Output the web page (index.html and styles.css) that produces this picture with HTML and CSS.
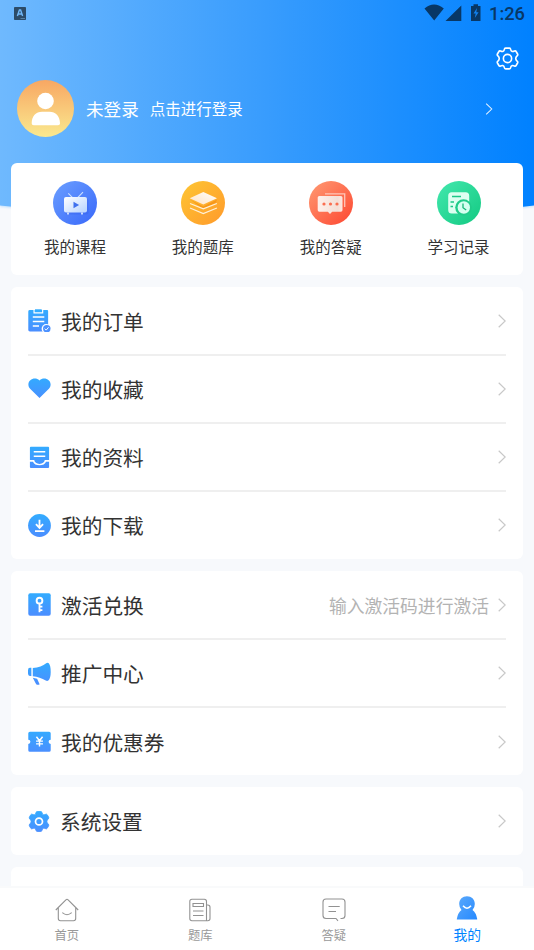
FILE: index.html
```html
<!DOCTYPE html>
<html lang="zh-CN">
<head>
<meta charset="utf-8">
<meta name="viewport" content="width=device-width">
<title>我的</title>
<link rel="stylesheet" href="styles.css">
</head>
<body>
<svg class="defs" width="0" height="0" aria-hidden="true">
  <defs>
    <linearGradient id="blue" gradientUnits="userSpaceOnUse" x1="0" y1="0" x2="0" y2="24"><stop stop-color="#32acff"/><stop offset="1" stop-color="#4b8dff"/></linearGradient>
    <linearGradient id="avatar" x1="0" y1="0" x2="0" y2="1"><stop stop-color="#f8a763"/><stop offset="1" stop-color="#fae98f"/></linearGradient>
    <linearGradient id="course" x1="0" y1="0" x2="1" y2="1"><stop stop-color="#6b9fff"/><stop offset="1" stop-color="#3968fa"/></linearGradient>
    <linearGradient id="bank" x1="0" y1="0" x2="1" y2="1"><stop stop-color="#fec633"/><stop offset="1" stop-color="#ff9a2b"/></linearGradient>
    <linearGradient id="qa" x1="0" y1="0" x2="1" y2="1"><stop stop-color="#ff9b74"/><stop offset="1" stop-color="#fd4630"/></linearGradient>
    <linearGradient id="study" x1="0" y1="0" x2="1" y2="1"><stop stop-color="#43e8ae"/><stop offset="1" stop-color="#13c982"/></linearGradient>
    <linearGradient id="screen" x1="0" y1="0" x2="1" y2="1"><stop stop-color="#fff"/><stop offset="1" stop-color="#b6d3ff"/></linearGradient>
    <linearGradient id="bubble" x1="0" y1="0" x2="1" y2="0"><stop stop-color="#fff0eb"/><stop offset=".8" stop-color="#f3dfd6"/><stop offset="1" stop-color="#ffe5df"/></linearGradient>
    <linearGradient id="sheet" x1="0" y1="1" x2="1" y2="0"><stop stop-color="#ffe4c7"/><stop offset=".5" stop-color="#fff0df"/><stop offset="1" stop-color="#fff"/></linearGradient>
    <linearGradient id="me" x1="0" y1="0" x2="1" y2="1"><stop stop-color="#5ba9fb"/><stop offset="1" stop-color="#2589ff"/></linearGradient>
    <linearGradient id="header" x1="0" y1="0" x2="1" y2="0"><stop stop-color="#6fb9fe"/><stop offset=".5" stop-color="#389cfd"/><stop offset="1" stop-color="#0081ff"/></linearGradient>
    <symbol id="arrow" viewBox="0 0 8 14"><path d="M.7.7 7.2 7 .7 13.3" fill="none" stroke="currentColor" stroke-width="1.2"/></symbol>
    <symbol id="gear-shape" viewBox="0 0 24 24" overflow="visible"><path d="M10 1.200H14Q15.200 1.200 15.300 2.600 15.500 4.200 16.900 4.600 18 4.800 19.200 4.200 20.400 3.600 21 4.700L22.500 7.300Q23.100 8.400 22 9.200 20.600 10.500 20.600 12T22 14.800Q23.100 15.600 22.500 16.700L21 19.300Q20.400 20.400 19.200 19.800 18 19.200 16.900 19.400 15.500 19.800 15.300 21.400 15.200 22.800 14 22.800H10Q8.800 22.800 8.700 21.400 8.500 19.800 7.100 19.400 6 19.200 4.800 19.800 3.600 20.400 3 19.300L1.500 16.700Q.9 15.600 2 14.800 3.400 13.500 3.400 12T2 9.200Q.9 8.400 1.500 7.300L3 4.700Q3.600 3.600 4.800 4.200 6 4.800 7.100 4.600 8.500 4.200 8.700 2.600 8.800 1.200 10 1.200z"/></symbol>
  </defs>
</svg>

<main class="screen">
  <svg class="backdrop" viewBox="0 0 534 222" preserveAspectRatio="none"><path d="M0 0h534v205.500Q267 236 0 205.500z" fill="url(#header)"/></svg>

  <header class="status">
    <svg class="status-app" viewBox="0 0 12 13"><rect width="12" height="13" rx=".8" fill="#2c4b68"/><path d="m3.400 9 2-6h1.200l2 6M4.200 7h3.600" fill="none" stroke="#72b8f8" stroke-width="1.400"/><path d="M6.500 11.500H11" stroke="#6a98bd" stroke-width=".7"/></svg>
    <svg class="status-signals" viewBox="0 0 58 18" fill="#083765"><path d="M.5 4.500Q10-3.500 19.800 4.500L10.200 16.500zM37.300 1.500v15.500H21.500zM47 2h2.500V.3h4.500V2h2.500v15H47z"/><path d="m53 4-3.500 5.500h2.200L50.800 14l3.800-5.800h-2.300z" fill="#1181ee"/></svg>
    <span class="status-time">1:26</span>
  </header>

  <div class="tools">
    <svg class="settings" viewBox="0 0 24 24" fill="none" stroke="#fff" stroke-width="1.700"><use href="#gear-shape"/><circle cx="12" cy="12" r="4.300"/></svg>
  </div>

  <section class="profile">
    <svg class="avatar" viewBox="0 0 57 57"><circle cx="28.500" cy="28.500" r="28.500" fill="url(#avatar)"/><circle cx="28.500" cy="21" r="8.300" fill="#fff"/><path d="M14.700 43.500C14.700 36 19 31.800 25 31.800h7.500c6 0 10.500 4.200 10.500 11.700q0 1.800-2 1.800H16.700q-2 0-2-1.800z" fill="#fff"/></svg>
    <span class="name">未登录</span>
    <span class="hint">点击进行登录</span>
    <svg class="arrow arrow-light"><use href="#arrow"/></svg>
  </section>

  <section class="card shortcuts">
    <div class="shortcut">
      <svg viewBox="0 0 44 44"><circle cx="22" cy="22" r="22" fill="url(#course)"/><path d="m15.300 12.300 4.200 4.400M30 11.200l-5.300 5.500" stroke="#cbdfff" stroke-width="1.100"/><rect x="12" y="17.500" width="23.500" height="16" rx="2" fill="#2e58e9" opacity=".3"/><rect x="11" y="16" width="23" height="15.500" rx="2" fill="url(#screen)"/><path d="M15 31.500v2M29 31.500v2" stroke="#d8e6ff" stroke-width="1.800"/><path d="m20.500 20.800 5.600 3.200-5.600 3.200z" fill="#3f70ee"/></svg>
      <span>我的课程</span>
    </div>
    <div class="shortcut">
      <svg viewBox="0 0 44 44"><circle cx="22" cy="22" r="22" fill="url(#bank)"/><path d="m9 18.500 13.300 7L36 18.500l-1 3-12.700 6.500z" fill="#f28b0c" opacity=".6"/><path d="m22.300 11 13.700 6.200-13.700 6.300L8.700 17.200z" fill="url(#sheet)"/><path d="m9 22.500 13.300 5.400 13.600-5.400M9 27l13.300 5.500L35.900 27" fill="none" stroke="#fff0d8" stroke-width="1.300"/></svg>
      <span>我的题库</span>
    </div>
    <div class="shortcut">
      <svg viewBox="0 0 44 44"><circle cx="22" cy="22" r="22" fill="url(#qa)"/><path d="M16 12.800h19.700V26" fill="none" stroke="#ffc6b8" stroke-width="1.300"/><path d="M10.300 15h21.600q1.600 0 1.600 1.600v12.500q0 1.600-1.600 1.600h-8.700L21 33l-2.200-2.300h-8.500q-1.600 0-1.600-1.600V16.600q0-1.600 1.600-1.600z" fill="url(#bubble)"/><circle cx="15" cy="23" r="1.600" fill="#fb6e50"/><circle cx="21.500" cy="23" r="1.600" fill="#fb6e50"/><circle cx="28" cy="23" r="1.600" fill="#fb6e50"/></svg>
      <span>我的答疑</span>
    </div>
    <div class="shortcut">
      <svg viewBox="0 0 44 44"><circle cx="22" cy="22" r="22" fill="url(#study)"/><rect x="11.200" y="11.200" width="21" height="21.300" rx="3.500" fill="#ddfff1"/><path d="M15 15.500h9M13.500 21h3.500M13.500 25.500H16" stroke="#1bc887" stroke-width="1.500"/><circle cx="26.500" cy="26.500" r="8.300" fill="#20cc8a"/><circle cx="26.800" cy="26.500" r="6.200" fill="#d5fff0"/><path d="M26 22.500v4.200l3.200 2.300" fill="none" stroke="#17b778" stroke-width="1.300"/></svg>
      <span>学习记录</span>
    </div>
  </section>

  <section class="card">
    <div class="row">
      <svg class="icon" viewBox="0 0 24 24"><path d="M2 1h18q1 0 1 1v15q-4.500 0-5.500 5.500v1H2Q.3 23.500.3 22V2.500Q.3 1 2 1z" fill="url(#blue)"/><path d="M6.300.5V4h9V.5" fill="none" stroke="#fff" stroke-width="1.200"/><path d="M7.300.3h7v2.600h-7z" fill="#32acff"/><path d="M5 8.300h12M5 13h12M5 17.800h6.500" stroke="#fff" stroke-width="1.500"/><circle cx="19" cy="20.500" r="4.800" fill="#fff"/><circle cx="19.600" cy="20.500" r="3.900" fill="#4b91ff"/><path d="m17.500 20.500 1.500 1.500 2.500-3" fill="none" stroke="#fff"/></svg>
      <span class="title">我的订单</span><svg class="arrow"><use href="#arrow"/></svg>
    </div>
    <div class="row">
      <svg class="icon" viewBox="0 0 24 24"><path d="M12 22 2.200 12.300C-3.700 4.900 6.300-2.100 12 3.600 17.700-2.100 27.700 4.900 21.800 12.300z" fill="url(#blue)"/></svg>
      <span class="title">我的收藏</span><svg class="arrow"><use href="#arrow"/></svg>
    </div>
    <div class="row">
      <svg class="icon" viewBox="0 0 24 24"><path d="M3 .7h18q1 0 1 1v13h-4.500q-.8 4-5.500 4t-5.500-4H2v-13q0-1 1-1z" fill="url(#blue)"/><path d="M2 16.500h3.200q1.500 3.700 6.800 3.700t6.800-3.700H22V22q0 1-1 1H3q-1 0-1-1z" fill="url(#blue)"/><path d="M6 6h12M6 10.600h12" stroke="#fff" stroke-width="1.500"/></svg>
      <span class="title">我的资料</span><svg class="arrow"><use href="#arrow"/></svg>
    </div>
    <div class="row">
      <svg class="icon" viewBox="0 0 24 24"><circle cx="12" cy="12" r="11.900" fill="url(#blue)"/><path d="M12 6v8.500m-3.700-4 3.700 4 3.700-4M7.300 17.800h9.800" fill="none" stroke="#fff" stroke-width="1.900"/></svg>
      <span class="title">我的下载</span><svg class="arrow"><use href="#arrow"/></svg>
    </div>
  </section>

  <section class="card">
    <div class="row">
      <svg class="icon" viewBox="0 0 24 24"><rect x=".3" y=".3" width="23.400" height="23.400" rx="2" fill="url(#blue)"/><circle cx="12" cy="8" r="3" fill="none" stroke="#fff" stroke-width="2"/><path d="M12 11v9M12 14.200h3M12 17.800h3" stroke="#fff" stroke-width="1.900"/></svg>
      <span class="title">激活兑换</span><span class="note">输入激活码进行激活</span><svg class="arrow"><use href="#arrow"/></svg>
    </div>
    <div class="row">
      <svg class="icon" viewBox="0 0 24 24"><path d="M3.500 6v8.500H2Q0 14.500 0 12V8.500Q0 6 2 6zM5 6.200Q14 5.500 19 1.200q1.200-1.100 2.700.2 2 2.500 2 9t-2.500 9q-1.200 1-2.700 0Q12.500 15.500 5 14.800zM5 16.500l4.500 1 2.500 5.500q.3.800-.7.800H9.500q-.7 0-1.100-.8z" fill="url(#blue)"/></svg>
      <span class="title">推广中心</span><svg class="arrow"><use href="#arrow"/></svg>
    </div>
    <div class="row">
      <svg class="icon" viewBox="0 0 24 24"><path d="M2 1.700h20q1.700 0 1.700 1.700v6.700q-2.200 0-2.200 2.200t2.200 2.200V21q0 1.700-1.700 1.700H2Q.3 22.700.3 21v-6.500q2.200 0 2.200-2.200T.3 10.100V3.400Q.3 1.700 2 1.700z" fill="url(#blue)"/><path d="m8.800 7 3.200 4.200L15.200 7M12 11.200v6M8.400 11.600h7.200M8.400 14.500h7.200" fill="none" stroke="#fff" stroke-width="1.500"/></svg>
      <span class="title">我的优惠券</span><svg class="arrow"><use href="#arrow"/></svg>
    </div>
  </section>

  <section class="card">
    <div class="row row-settings">
      <svg class="icon" viewBox="0 0 24 24"><use href="#gear-shape" fill="url(#blue)" stroke="url(#blue)"/><circle cx="12" cy="12" r="3.800" fill="none" stroke="#fff" stroke-width="1.900"/></svg>
      <span class="title">系统设置</span><svg class="arrow"><use href="#arrow"/></svg>
    </div>
  </section>

  <section class="card card-cut"></section>

  <nav class="tabs">
    <div class="tab">
      <svg viewBox="0 0 24 24"><path d="M.8 12 10.900 1.800q1.100-1.100 2.200 0L23.200 12M3.300 10v10.500q0 2.200 2.200 2.200h13q2.200 0 2.200-2.200V10M7.300 14.700q4.700 4 9.400 0"/></svg><span>首页</span>
    </div>
    <div class="tab">
      <svg viewBox="0 0 24 24"><path d="M18.500 22.700H4q-2.200 0-2.200-2.200V3.500Q1.800 1.300 4 1.300h12.300q2.200 0 2.200 2.200zM18.500 7h1.300q2.200 0 2.200 2.200v11.300q0 2.200-2.200 2.200h-1.300M5 5.500h10.500v3H5zM5 13h10.500M5 17.500h10.500"/></svg><span>题库</span>
    </div>
    <div class="tab">
      <svg viewBox="0 0 24 24"><path d="M18.500 20.500H20q3 0 3-3V4q0-3-3-3H4Q1 1 1 4v13.500q0 3 3 3h10l2 2.300M6.500 8.500h11.200M6.500 13.500h7.500"/></svg><span>答疑</span>
    </div>
    <div class="tab tab-active">
      <svg viewBox="0 0 24 24"><path d="M6.500 14Q4.200 11.500 4.200 8C4.200 3.200 7.600.2 12 .2S19.800 3.200 19.800 8q0 3.500-2.300 6 3.500 2.500 4.700 9 .1.500-.5.500H2.300q-.6 0-.5-.5 1.200-6.500 4.700-9z" fill="url(#me)" stroke="none"/><path d="M8 9.800q4 4.700 8 0" stroke="#fff" stroke-width="1.500"/></svg><span>我的</span>
    </div>
  </nav>
</main>
</body>
</html>
```
FILE: styles.css
```css
* {
  box-sizing: border-box;
}

body {
  margin: 0;
  background: #f7f9fc;
  font-family: "Noto Sans CJK SC", sans-serif;
  color: #333;
}

.defs {
  position: absolute;
}

.screen {
  position: relative;
  z-index: 0;
  display: flex;
  flex-direction: column;
  height: 950px;
  overflow: hidden;
}

.backdrop {
  position: absolute;
  z-index: -1;
  top: 0;
  left: 0;
  width: 100%;
  height: 222px;
  filter: drop-shadow(0 1px 1px #8cc8ff80);
}

.status {
  display: flex;
  flex: none;
  align-items: center;
  height: 27px;
  padding: 0 9px 0 14px;
}

.status-app {
  width: 12px;
  height: 13px;
}

.status-signals {
  width: 58px;
  height: 18px;
  margin: 0 7px 1px auto;
}

.status-time {
  font: 500 18.3px/27px Roboto, sans-serif;
  color: #083765;
}

.tools {
  display: flex;
  flex: none;
  justify-content: flex-end;
  height: 53px;
  padding: 19.5px 15.5px 0 0;
}

.settings {
  width: 23px;
  height: 23px;
}

.profile {
  display: flex;
  flex: none;
  align-items: center;
  height: 57px;
  padding: 0 41px 0 17px;
  color: #fff;
}

.avatar {
  width: 57px;
  height: 57px;
}

.name {
  margin-left: 12px;
  font-size: 17.6px;
}

.hint {
  margin: 0 0 2px 11px;
  font-size: 15.5px;
}

.arrow {
  flex: none;
  width: 8px;
  height: 14px;
  color: #c8c8c8;
}

.arrow-light {
  height: 12px;
  margin-left: auto;
  color: #e5f2ff;
}

.card {
  flex: none;
  margin: 0 11px 12.5px;
  padding: .6px 17px 0;
  border-radius: 6px;
  background: #fff;
}

.shortcuts {
  display: grid;
  grid-template-columns: repeat(4, 1fr);
  height: 111.5px;
  margin-top: 26px;
  padding: 18px .5px 0 0;
}

.shortcut {
  display: flex;
  flex-direction: column;
  align-items: center;
}

.shortcut svg {
  width: 44px;
  height: 44px;
}

.shortcut span {
  margin-top: 9px;
  font-size: 15.5px;
  line-height: 24px;
}

.row {
  display: flex;
  align-items: center;
  height: 68.2px;
  border-bottom: 2px solid #efefef;
}

.row:last-child {
  height: 66.6px;
  border-bottom: 0;
}

.icon {
  width: 23px;
  height: 23px;
}

.title {
  margin-left: 10px;
  font-size: 20.7px;
  line-height: 30px;
}

.row-settings .icon {
  width: 22px;
}

.note {
  margin-left: auto;
  font-size: 17.8px;
  color: #b3b3b3;
}

.row .arrow {
  margin-left: auto;
}

.row .note + .arrow {
  margin-left: 9px;
}

.card-cut {
  height: 30px;
  margin-bottom: 0;
}

.tabs {
  position: absolute;
  right: 0;
  bottom: 0;
  left: 0;
  display: grid;
  grid-template-columns: repeat(4, 1fr);
  height: 64px;
  border-top: 2px solid #f9fafb;
  background: #fff;
}

.tab {
  display: flex;
  flex-direction: column;
  align-items: center;
  padding-top: 10px;
  font-size: 12.3px;
  line-height: 18px;
  color: #999;
}

.tab svg {
  width: 24px;
  height: 24px;
  margin-bottom: 4px;
  fill: none;
  stroke: #929292;
  stroke-width: 1.1;
}

.tab-active {
  padding-top: 8px;
  font-size: 13.8px;
  line-height: 20px;
  color: #0083ff;
}
```
